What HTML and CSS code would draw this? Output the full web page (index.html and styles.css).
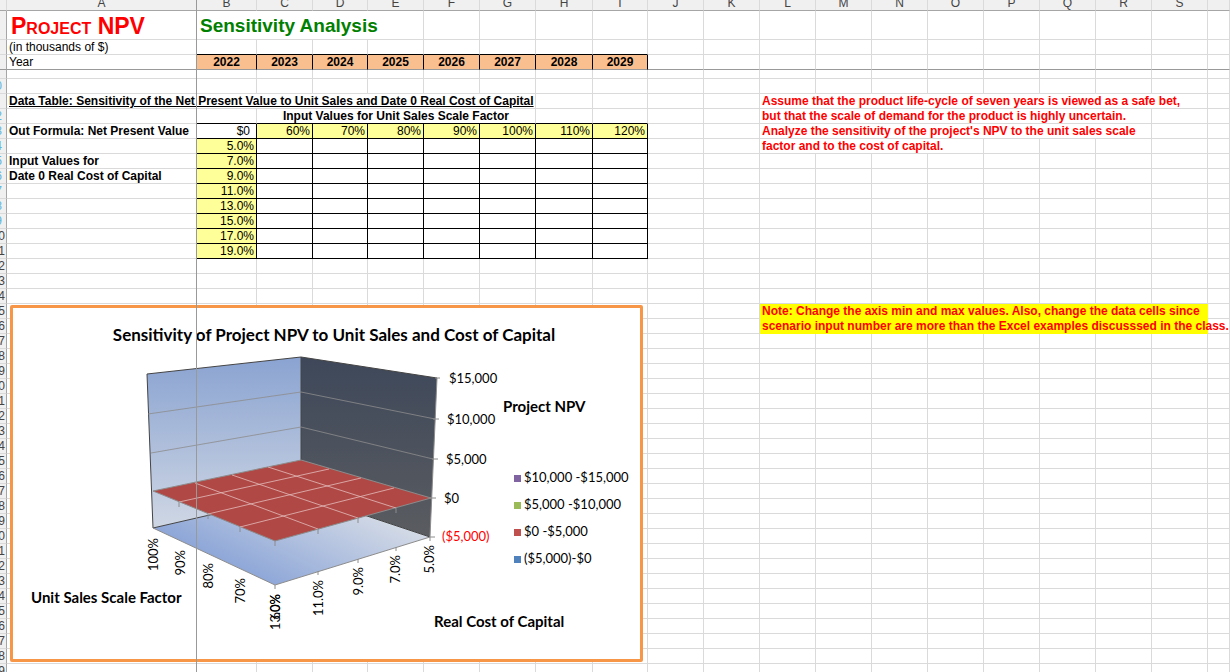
FILE: index.html
```html
<!DOCTYPE html>
<html lang="en">
<head>
    <meta charset="UTF-8">
    <title>Project NPV - Sensitivity Analysis</title>
    <link rel="stylesheet" href="styles.css">
</head>
<body>

<div class="sheet">
    <table class="grid" id="grid">
        <colgroup>
            <col class="col-num">
            <col class="col-a">
            <col class="col-b">
            <col class="col-std">
            <col class="col-slim">
            <col class="col-std">
            <col class="col-std">
            <col class="col-std">
            <col class="col-wide">
            <col class="col-slim">
            <col class="col-std" span="10">
            <col>
        </colgroup>
        <thead>
            <tr>
                <th></th><th>A</th><th>B</th><th>C</th><th>D</th><th>E</th><th>F</th><th>G</th><th>H</th><th>I</th><th>J</th>
                <th>K</th><th>L</th><th>M</th><th>N</th><th>O</th><th>P</th><th>Q</th><th>R</th><th>S</th><th></th>
            </tr>
        </thead>
        <tbody>
            <tr class="title-row">
                <th></th>
                <td class="project">Project NPV</td>
                <td class="heading" colspan="4">Sensitivity Analysis</td>
            </tr>
            <tr class="above-years">
                <th></th>
                <td>(in thousands of $)</td>
            </tr>
            <tr class="years">
                <th></th>
                <td>Year</td>
                <td class="year">2022</td>
                <td class="year">2023</td>
                <td class="year">2024</td>
                <td class="year">2025</td>
                <td class="year">2026</td>
                <td class="year">2027</td>
                <td class="year">2028</td>
                <td class="year">2029</td>
            </tr>
            <tr class="short-row"><th></th></tr>
            <tr><th class="filtered">10</th></tr>
            <tr>
                <th></th>
                <td class="bold underline" colspan="7">Data Table: Sensitivity of the Net Present Value to Unit Sales and Date 0 Real Cost of Capital</td>
                <td></td><td></td><td></td><td></td>
                <td class="note" colspan="8">Assume that the product life-cycle of seven years is viewed as a safe bet,</td>
            </tr>
            <tr class="above-table">
                <th class="filtered">12</th>
                <td></td>
                <td></td>
                <td class="bold center" colspan="5">Input Values for Unit Sales Scale Factor</td>
                <td></td><td></td><td></td><td></td>
                <td class="note" colspan="7">but that the scale of demand for the product is highly uncertain.</td>
            </tr>
            <tr>
                <th class="filtered">13</th>
                <td class="bold">Out Formula: Net Present Value</td>
                <td class="cell output">$0</td>
                <td class="cell input">60%</td>
                <td class="cell input">70%</td>
                <td class="cell input">80%</td>
                <td class="cell input">90%</td>
                <td class="cell input">100%</td>
                <td class="cell input">110%</td>
                <td class="cell input">120%</td>
                <td></td><td></td>
                <td class="note" colspan="7">Analyze the sensitivity of the project's NPV to the unit sales scale</td>
            </tr>
            <tr class="result">
                <th class="filtered">14</th>
                <td></td>
                <td class="cell input">5.0%</td>
                <td></td><td></td><td></td><td></td><td></td><td></td><td></td><td></td><td></td>
                <td class="note" colspan="4">factor and to the cost of capital.</td>
            </tr>
            <tr class="result"><th class="filtered">15</th><td class="bold">Input Values for</td><td class="cell input">7.0%</td></tr>
            <tr class="result"><th class="filtered">16</th><td class="bold">Date 0 Real Cost of Capital</td><td class="cell input">9.0%</td></tr>
            <tr class="result"><th class="filtered">17</th><td></td><td class="cell input">11.0%</td></tr>
            <tr class="result"><th class="filtered">18</th><td></td><td class="cell input">13.0%</td></tr>
            <tr class="result"><th class="filtered">19</th><td></td><td class="cell input">15.0%</td></tr>
            <tr class="result"><th>20</th><td></td><td class="cell input">17.0%</td></tr>
            <tr class="result"><th>21</th><td></td><td class="cell input">19.0%</td></tr>
            <tr><th>22</th></tr>
            <tr><th>23</th></tr>
            <tr><th>24</th></tr>
            <tr>
                <th>25</th>
                <td></td><td></td><td></td><td></td><td></td><td></td><td></td><td></td><td></td><td></td><td></td>
                <td class="note marked" colspan="8">Note: Change the axis min and max values. Also, change the data cells since</td>
            </tr>
            <tr>
                <th>26</th>
                <td></td><td></td><td></td><td></td><td></td><td></td><td></td><td></td><td></td><td></td><td></td>
                <td class="note marked" colspan="8">scenario input number are more than the Excel examples discusssed in the class.</td>
            </tr>
        </tbody>
    </table>

    <figure class="chart">
        <svg viewBox="13 308 627 351" role="img" aria-label="Sensitivity of Project NPV to Unit Sales and Cost of Capital">
            <defs>
                <linearGradient id="left-wall" x1="0" y1="0" x2="0" y2="1">
                    <stop offset="0" stop-color="#8aa3d1"/>
                    <stop offset="1" stop-color="#cfd7e4"/>
                </linearGradient>
                <linearGradient id="right-wall" x1="0" y1="0" x2="0" y2="1">
                    <stop offset="0" stop-color="#3e485a"/>
                    <stop offset="1" stop-color="#5a5c60"/>
                </linearGradient>
                <linearGradient id="floor" gradientUnits="userSpaceOnUse" x1="240" y1="570" x2="290" y2="470">
                    <stop offset="0" stop-color="#8ea7d8"/>
                    <stop offset="1" stop-color="#d3dae6"/>
                </linearGradient>
            </defs>

            <text class="chart-title" x="334" y="341" text-anchor="middle">Sensitivity of Project NPV to Unit Sales and Cost of Capital</text>

            <!-- walls and floor -->
            <polygon fill="url(#left-wall)" points="147,374 301,357 301,494 153,528"/>
            <polygon fill="url(#right-wall)" points="301,357 437,378 430,537 301,494"/>
            <polygon fill="url(#floor)" points="153,528 301,494 430,537 275,585"/>
            <polyline class="edge" points="301,494 153,528 147,374 301,357 437,378"/>
            <path class="edge" d="M301 357V494L430 537"/>
            <path class="line" d="M437 378L430 537L275 585L153 528"/>
            <path class="line wall-line" d="M148 414L301 392L435 419M151 453L301 427L433 459"/>

            <!-- surface -->
            <polygon class="surface" points="153,491 301,460 431,498 275,541"/>
            <path class="mesh" d="M195 483L318 529M232 475L358 518M268 467L396 508M179 502L329 469M208 514L361 478M240 527L394 488"/>
            <path class="line" d="M179 502v5M208 514v5M240 527v5M275 541v5M318 529v5M358 518v5M396 508v5"/>

            <!-- axis ticks -->
            <path class="line" d="M435 378h5M433 419h6M432 459h6M430 498h6M430 537h5M430 537v4M396 547v4M358 559v4M318 571v4M275 585v4"/>

            <g class="label">
                <text x="449" y="383">$15,000</text>
                <text x="447" y="424">$10,000</text>
                <text x="446" y="464">$5,000</text>
                <text x="444" y="503">$0</text>
                <text x="442" y="541" class="negative">($5,000)</text>
            </g>

            <g class="label" text-anchor="end">
                <text transform="translate(158 538) rotate(-90)">100%</text>
                <text transform="translate(185 550) rotate(-90)">90%</text>
                <text transform="translate(213 563) rotate(-90)">80%</text>
                <text transform="translate(245 578) rotate(-90)">70%</text>
                <text transform="translate(280 594) rotate(-90)">60%</text>
                <text transform="translate(280 594) rotate(-90)">13.0%</text>
                <text transform="translate(323 580) rotate(-90)">11.0%</text>
                <text transform="translate(363 567) rotate(-90)">9.0%</text>
                <text transform="translate(400 555) rotate(-90)">7.0%</text>
                <text transform="translate(434 545) rotate(-90)">5.0%</text>
            </g>

            <g class="axis-title">
                <text x="503" y="412">Project NPV</text>
                <text x="31" y="603">Unit Sales Scale Factor</text>
                <text x="434" y="627">Real Cost of Capital</text>
            </g>

            <g class="label">
                <rect x="514" y="475" width="7" height="7" fill="#8064a2"/>
                <text x="524" y="482">$10,000 -$15,000</text>
                <rect x="514" y="502" width="7" height="7" fill="#9bbb59"/>
                <text x="524" y="509">$5,000 -$10,000</text>
                <rect x="514" y="529" width="7" height="7" fill="#c0504d"/>
                <text x="524" y="536">$0 -$5,000</text>
                <rect x="514" y="556" width="7" height="7" fill="#4f81bd"/>
                <text x="524" y="563">($5,000)-$0</text>
            </g>
        </svg>
    </figure>

    <div class="freeze"></div>
</div>

<script>
    const COLUMNS = 21;
    const LAST_ROW = 49;
    const body = document.querySelector('#grid tbody');

    // empty numbered rows below the last used one
    for (let n = 27; n <= LAST_ROW; n++) {
        const row = body.insertRow();
        const head = document.createElement('th');
        head.textContent = n;
        row.appendChild(head);
    }

    // fill every row up to the last column
    for (const row of body.rows) {
        let used = 0;
        for (const cell of row.cells) {
            used += cell.colSpan;
        }
        for (; used < COLUMNS; used++) {
            row.insertCell();
        }
    }
</script>

</body>
</html>
```
FILE: styles.css
```css
body {
    margin: 0;
    background-color: #fff;
    color: #000;
    font-family: "Liberation Sans", Arial, sans-serif;
    font-size: 12px;
    overflow: hidden;
}

.sheet {
    position: relative;
    height: 100vh;
    overflow: hidden;
}

.grid {
    width: 100%;
    table-layout: fixed;
    border-collapse: separate;
    border-spacing: 0;
}

.col-num { width: 7px; }
.col-a { width: 190px; }
.col-b { width: 60px; }
.col-std { width: 56px; }
.col-slim { width: 55px; }
.col-wide { width: 57px; }

.grid th,
.grid td {
    box-sizing: border-box;
    height: 15px;
    padding: 0 2px;
    border-right: 1px solid #dadada;
    border-bottom: 1px solid #dadada;
    line-height: 14px;
    text-align: left;
    vertical-align: middle;
    white-space: nowrap;
}

.grid thead th {
    height: 11px;
    padding: 0;
    background-color: #f0f0f0;
    border-bottom-color: #a6a6a6;
    color: #444;
    font-weight: normal;
    line-height: 6px;
    text-align: center;
    vertical-align: top;
}

.grid tbody th {
    padding: 0 2px 0 0;
    background-color: #f0f0f0;
    border-right-color: #a6a6a6;
    color: #444;
    font-weight: normal;
    direction: rtl;
}

.grid tbody th.filtered {
    padding-right: 5px;
    color: #5fb4e0;
}

.grid .title-row td {
    height: 29px;
    padding-top: 2px;
    line-height: 26px;
}

.grid .short-row td,
.grid .short-row th {
    height: 9px;
    line-height: 8px;
}

.grid .project {
    padding-left: 4px;
    color: #f00;
    font-size: 23px;
    font-weight: bold;
    font-variant: small-caps;
}

.grid .heading {
    padding-left: 3px;
    color: #008000;
    font-size: 19px;
    font-weight: bold;
}

.bold {
    font-weight: bold;
}

.underline {
    text-decoration: underline;
}

.grid .center {
    text-align: center;
}

/* black lines round the years and the data table */
.above-years td:nth-child(n+3):nth-child(-n+10),
.above-table td:nth-child(n+3):nth-child(-n+6) {
    border-bottom-color: #000;
}

.grid .years td,
.grid .years th {
    border-bottom-color: #999;
}

.grid .year {
    background-color: #fabf8f;
    border-right-color: #000;
    font-weight: bold;
    text-align: center;
}

.grid .cell {
    border-color: #000;
    text-align: right;
}

.grid .input {
    background-color: #ff9;
}

.grid .output {
    padding-right: 6px;
}

.result td:nth-child(n+3):nth-child(-n+10) {
    border-color: #000;
}

.grid .note {
    color: #f00;
    font-weight: bold;
}

.grid .marked {
    background-color: #ff0;
    border-color: #ff0;
}

.chart {
    position: absolute;
    left: 10px;
    top: 305px;
    width: 627px;
    margin: 0;
    border: 3px solid #f79646;
    border-radius: 2px;
    background-color: #fff;
    font-family: Lato, sans-serif;
}

.chart svg {
    display: block;
    width: 100%;
}

.chart-title {
    font-size: 17px;
    font-weight: bold;
}

.axis-title {
    font-size: 15px;
    font-weight: bold;
}

.label {
    font-size: 13px;
}

.negative {
    fill: #f00;
}

.edge {
    fill: none;
    stroke: #444;
}

.line {
    fill: none;
    stroke: #8c8c8c;
}

.wall-line {
    stroke-opacity: 0.8;
}

.surface {
    fill: #b04845;
    stroke: #8c8c8c;
}

.mesh {
    fill: none;
    stroke: #e3bdbc;
    stroke-opacity: 0.8;
}

/* frozen pane line, runs over cells and chart */
.freeze {
    position: absolute;
    left: 196px;
    top: 0;
    bottom: 0;
    width: 1px;
    background-color: #999;
}
```
